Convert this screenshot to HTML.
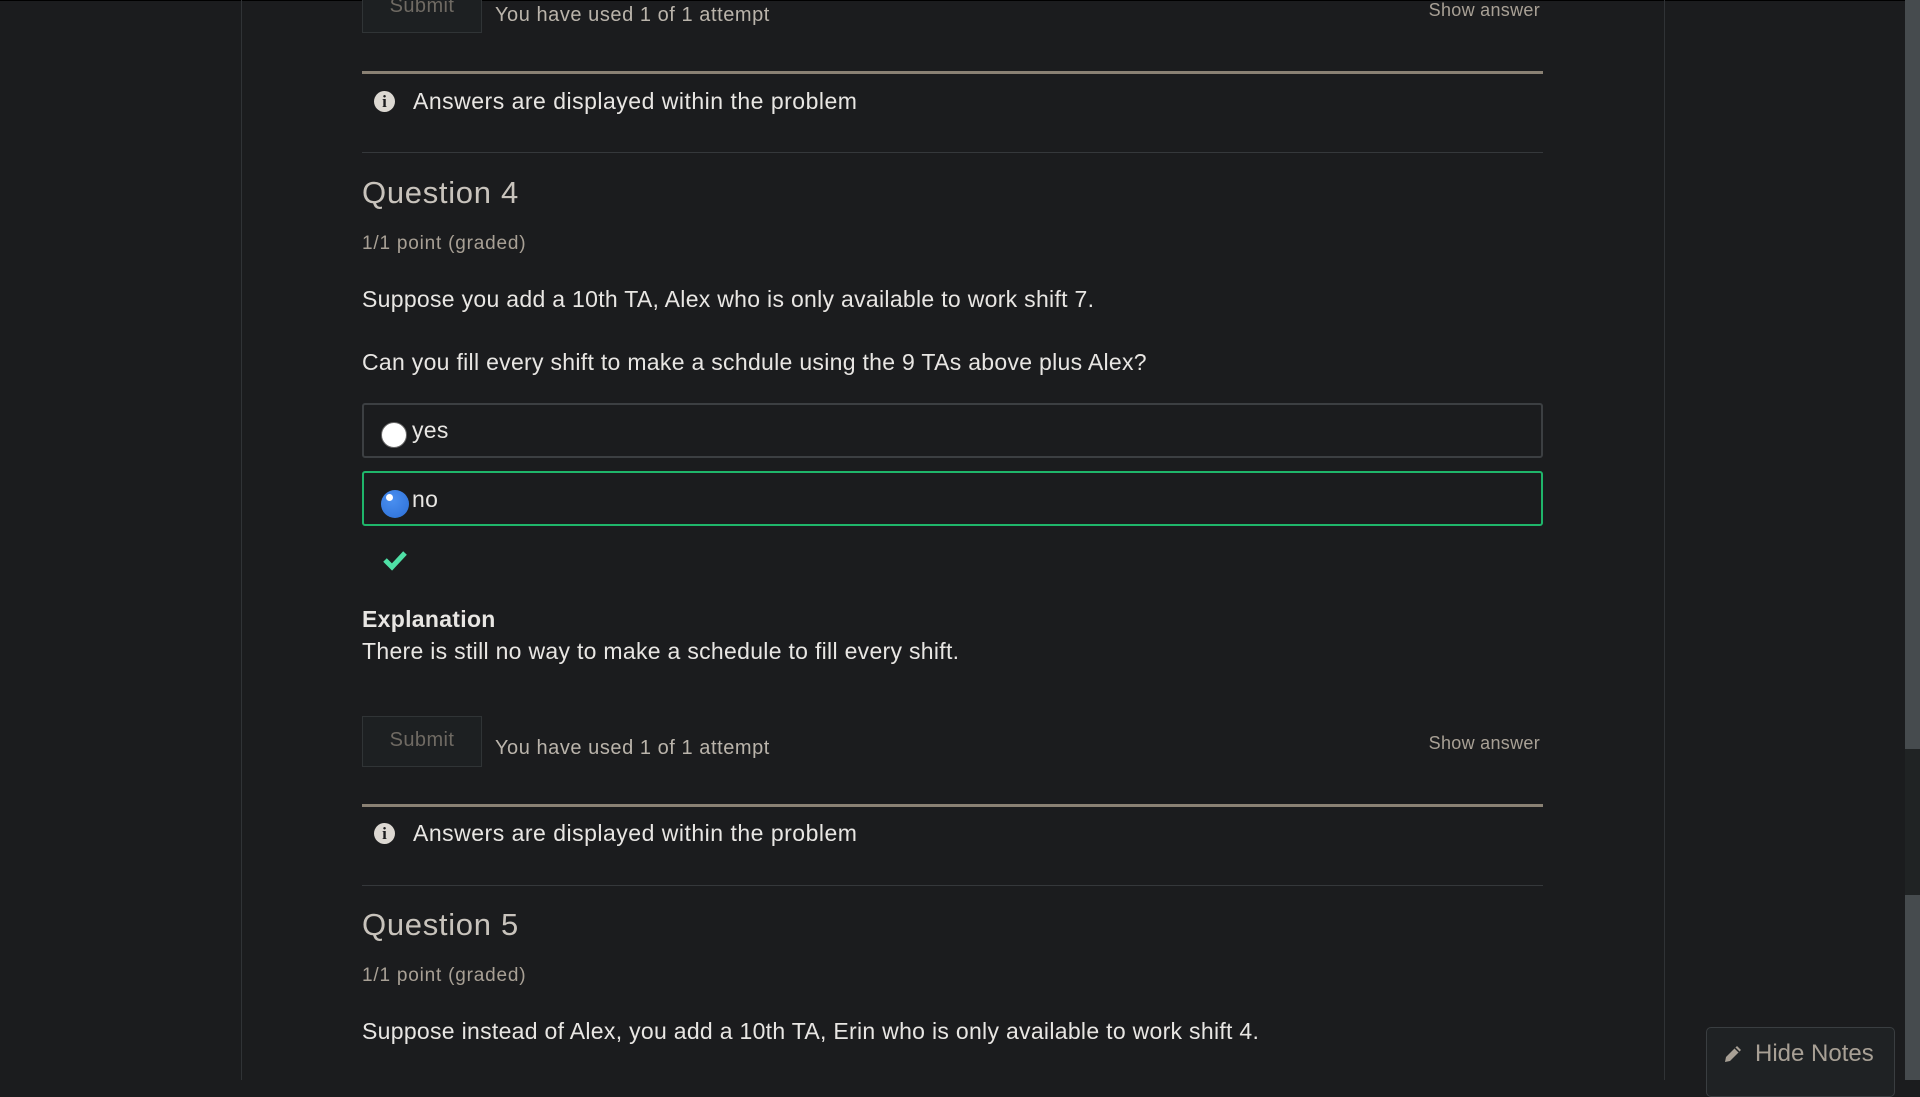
<!DOCTYPE html>
<html><head><meta charset="utf-8"><style>
*{margin:0;padding:0;box-sizing:border-box}
body{width:1920px;height:1080px;background:#1b1c1e;overflow:hidden;position:relative;font-family:"Liberation Sans",sans-serif;color:#e8e6e3}
.a{position:absolute;white-space:nowrap}
.vl{position:absolute;top:0;width:1px;height:1080px;background:#303336}
.btn{position:absolute;left:362px;width:120px;height:51px;border:1px solid #303436;background:#1d2022;color:#6f6a63;font-size:20px;text-align:center;line-height:46px;letter-spacing:0.4px}
.used{font-size:20px;color:#bab4ab;letter-spacing:0.55px}
.show{font-size:18px;color:#a8a095;letter-spacing:0.3px}
.thick{position:absolute;left:362px;width:1181px;height:3px;background:#8a8174}
.hr{position:absolute;left:362px;width:1181px;height:1px;background:#35383b}
.info{font-size:23px;color:#e8e6e3;letter-spacing:0.5px}
.ic{position:absolute;width:21px;height:21px;border-radius:50%;background:#dcd8d2;color:#1b1c1e;font:bold 17px "Liberation Serif",serif;text-align:center;line-height:21px}
.q{font-size:31px;color:#c8c3bc;letter-spacing:0.7px}
.g{font-size:19px;color:#a8a095;letter-spacing:0.8px}
.p{font-size:23px;color:#e8e6e3;letter-spacing:0.3px}
.opt{position:absolute;left:362px;width:1181px;border-radius:3px}
</style></head><body>
<div style="position:absolute;left:0;top:0;width:1920px;height:1px;background:#000"></div>
<div class="vl" style="left:241px"></div>
<div class="vl" style="left:1664px"></div>
<div style="position:absolute;left:1905px;top:0;width:15px;height:749px;background:#464b4e"></div>
<div style="position:absolute;left:1905px;top:749px;width:15px;height:146px;background:#202324"></div>
<div style="position:absolute;left:1905px;top:895px;width:15px;height:185px;background:#464b4e"></div>

<div class="btn" style="top:-18px">Submit</div>
<div class="a used" style="left:495px;top:4px">You have used 1 of 1 attempt</div>
<div class="a show" style="right:380px;top:0px">Show answer</div>
<div class="thick" style="top:71px"></div>
<div class="ic" style="left:374px;top:91px">i</div>
<div class="a info" style="left:413px;top:88px">Answers are displayed within the problem</div>
<div class="hr" style="top:152px"></div>

<div class="a q" style="left:362px;top:175px">Question 4</div>
<div class="a g" style="left:362px;top:233px">1/1 point (graded)</div>
<div class="a p" style="left:362px;top:286px">Suppose you add a 10th TA, Alex who is only available to work shift 7.</div>
<div class="a p" style="left:362px;top:349px">Can you fill every shift to make a schdule using the 9 TAs above plus Alex?</div>

<div class="opt" style="top:403px;height:55px;border:2px solid #3c3f42"></div>
<div class="a" style="left:381px;top:422px;width:26px;height:26px;border-radius:50%;background:#fff;border:1px solid #666"></div>
<div class="a p" style="left:412px;top:417px">yes</div>
<div class="opt" style="top:471px;height:55px;border:2px solid #1fb56a"></div>
<div class="a" style="left:381px;top:490px;width:28px;height:28px;border-radius:50%;background:radial-gradient(circle at 40% 35%,#4a8ff0,#2c6fd6)"></div>
<div class="a" style="left:386px;top:494px;width:7px;height:7px;border-radius:50%;background:#fff"></div>
<div class="a p" style="left:412px;top:486px">no</div>
<svg class="a" style="left:382px;top:549px" width="26" height="22" viewBox="0 0 26 22"><path d="M3 11 L10 18 L23 4" stroke="#4fe0a6" stroke-width="5" fill="none" stroke-linejoin="miter"/></svg>

<div class="a p" style="left:362px;top:606px;font-weight:bold">Explanation</div>
<div class="a p" style="left:362px;top:638px">There is still no way to make a schedule to fill every shift.</div>

<div class="btn" style="top:716px">Submit</div>
<div class="a used" style="left:495px;top:737px">You have used 1 of 1 attempt</div>
<div class="a show" style="right:380px;top:733px">Show answer</div>
<div class="thick" style="top:804px"></div>
<div class="ic" style="left:374px;top:823px">i</div>
<div class="a info" style="left:413px;top:820px">Answers are displayed within the problem</div>
<div class="hr" style="top:885px"></div>

<div class="a q" style="left:362px;top:907px">Question 5</div>
<div class="a g" style="left:362px;top:965px">1/1 point (graded)</div>
<div class="a p" style="left:362px;top:1018px">Suppose instead of Alex, you add a 10th TA, Erin who is only available to work shift 4.</div>

<div class="a" style="left:1706px;top:1027px;width:189px;height:70px;border:1px solid #3a3e41;border-radius:5px;background:#1f2224"></div>
<svg class="a" style="left:1721px;top:1042px" width="24" height="24" viewBox="0 0 24 24"><path d="M4 20 L5 15 L16 4 L20 8 L9 19 Z" fill="#a8a095"/><path d="M14 6 L18 10" stroke="#1f2224" stroke-width="1.5"/></svg>
<div class="a" style="left:1755px;top:1040px;font-size:24px;color:#a8a095">Hide Notes</div>
</body></html>
